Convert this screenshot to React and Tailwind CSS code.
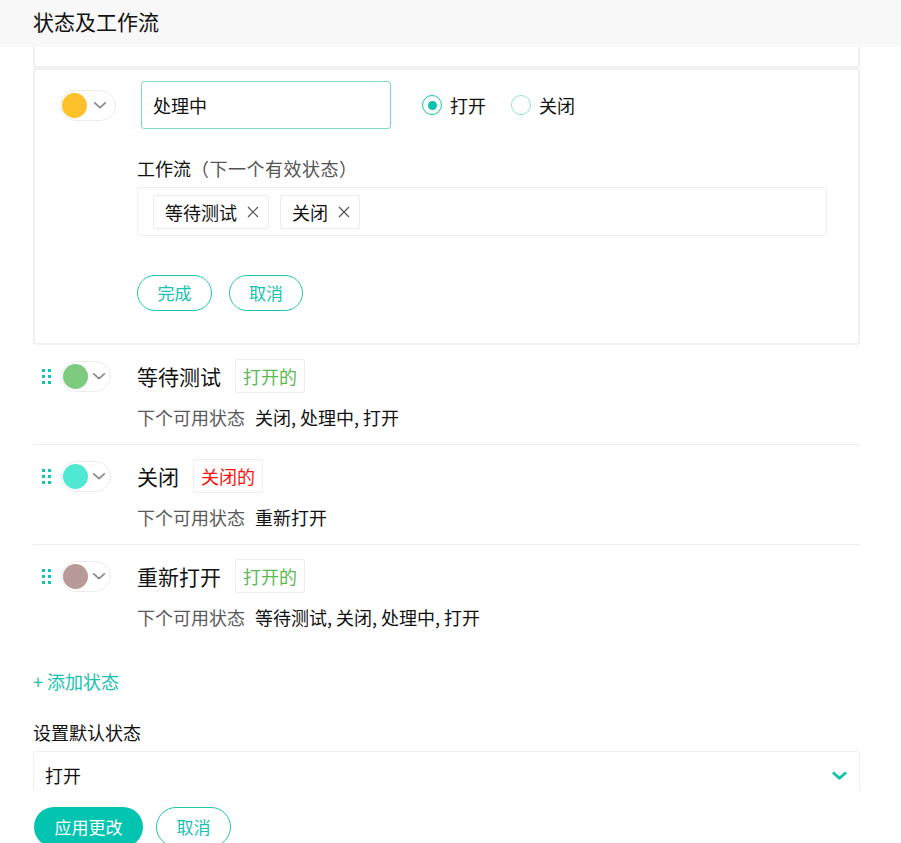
import React from "react";

const TEAL = "text-[#17c2ae]";

function Chevron({ className = "w-[14px] h-[14px] text-[#8a8a8a]", stroke = 1.5 }) {
  return (
    <svg viewBox="0 0 12 12" className={className} fill="none">
      <path d="M1.5 4.2 L6 8.2 L10.5 4.2" stroke="currentColor" strokeWidth={stroke} strokeLinecap="round" strokeLinejoin="round" />
    </svg>
  );
}

function ColorPill({ color, wide }) {
  return (
    <div
      className={`flex items-center h-[31px] ${wide ? "w-[56px]" : "w-[50px]"} rounded-full border border-[#ececec] bg-white pl-[1px]`}
    >
      <span className="w-[25px] h-[25px] rounded-full" style={{ background: color }} />
      <span className={`${wide ? "ml-[6px]" : "ml-[4px]"} flex items-center`}>
        <Chevron />
      </span>
    </div>
  );
}

function DragHandle() {
  return (
    <div className="grid grid-cols-2 gap-x-[3px] gap-y-[3px] w-[9px]">
      {[0, 1, 2, 3, 4, 5].map((i) => (
        <span key={i} className="w-[3px] h-[3px] bg-[#14c3b0]" />
      ))}
    </div>
  );
}

function Radio({ checked, label }) {
  return (
    <label className="flex items-center gap-[8px]">
      <span
        className={`w-[20px] h-[20px] rounded-full border flex items-center justify-center ${
          checked ? "border-[#17c2ae]" : "border-[#8fe2d8]"
        }`}
      >
        {checked && <span className="w-[9px] h-[9px] rounded-full bg-[#0ec2ad]" />}
      </span>
      <span className="text-[18px] leading-6">{label}</span>
    </label>
  );
}

function Tag({ text }) {
  return (
    <div className="flex items-center h-[34px] border border-[#ececec] rounded-[3px] pl-[11px] pr-[8px] gap-[9px]">
      <span className="text-[18px] leading-6">{text}</span>
      <svg viewBox="0 0 14 14" className="w-[14px] h-[14px] text-[#555]">
        <path d="M2 2 L12 12 M12 2 L2 12" stroke="currentColor" strokeWidth="1.2" />
      </svg>
    </div>
  );
}

function OutlineButton({ children, w }) {
  return (
    <button className={`h-[36px] ${w} rounded-full border border-[#1fc6b3] ${TEAL} text-[17px] leading-6 bg-white`}>
      {children}
    </button>
  );
}

const rows = [
  { name: "等待测试", color: "#7ccb7f", badge: "打开的", badgeColor: "text-[#5cba52]", next: "关闭, 处理中, 打开", divider: true },
  { name: "关闭", color: "#4fe8d2", badge: "关闭的", badgeColor: "text-[#ff1010]", next: "重新打开", divider: true },
  { name: "重新打开", color: "#b89a98", badge: "打开的", badgeColor: "text-[#5cba52]", next: "等待测试, 关闭, 处理中, 打开", divider: false },
];

export default function App() {
  return (
    <div
      className="h-[843px] w-full flex flex-col overflow-hidden bg-white text-[#111]"
      style={{ fontFamily: '"Noto Sans CJK SC", "Noto Sans", sans-serif' }}
    >
      {/* Header */}
      <div className="h-[47px] shrink-0 bg-[#f8f8f8] px-[33px] pt-[7px]">
        <h1 className="text-[21px] leading-[28px] font-normal">状态及工作流</h1>
      </div>

      {/* Body */}
      <div className="flex-1 overflow-hidden pl-[33px]">
        <div className="w-[827px]">
          {/* previous card tail */}
          <div className="h-[21px] border-2 border-t-0 border-[#f0f0f0] rounded-b-[3px]" />

          {/* Edit card */}
          <div className="border-2 border-[#f0f0f0] rounded-[3px] pt-[11px] pb-[32px] pl-[25px]">
            <div className="flex items-center h-[48px]">
              <ColorPill color="#fcc12b" wide />
              <div className="ml-[25px] w-[250px] h-[48px] border border-[#7fd8cc] rounded-[3px] flex items-center px-[11px]">
                <span className="text-[18px] leading-6">处理中</span>
              </div>
              <div className="ml-[31px] flex items-center gap-[25px]">
                <Radio checked label="打开" />
                <Radio label="关闭" />
              </div>
            </div>

            <div className="ml-[77px]">
              <p className="mt-[27px] text-[18px] leading-6">
                工作流<span className="text-[#555] tracking-[0.5px]">（下一个有效状态）</span>
              </p>
              <div className="mt-[7px] w-[690px] h-[49px] border border-[#eeeeee] rounded-[3px] flex items-center pl-[15px] gap-[11px]">
                <Tag text="等待测试" />
                <Tag text="关闭" />
              </div>
              <div className="mt-[39px] flex gap-[17px]">
                <OutlineButton w="w-[75px]">完成</OutlineButton>
                <OutlineButton w="w-[74px]">取消</OutlineButton>
              </div>
            </div>
          </div>

          {/* Status rows */}
          {rows.map((r) => (
            <div
              key={r.name}
              className={`pt-[14px] pb-[15px] ${r.divider ? "border-b border-[#eeeeee]" : ""}`}
            >
              <div className="flex items-center h-[34px]">
                <div className="w-[28px] pl-[9px] pt-[1px]">
                  <DragHandle />
                </div>
                <ColorPill color={r.color} />
                <span className="ml-[26px] text-[21px] leading-7">{r.name}</span>
                <span
                  className={`ml-[14px] h-[34px] px-[7px] border border-[#eeeeee] rounded-[3px] flex items-center text-[18px] ${r.badgeColor}`}
                >
                  {r.badge}
                </span>
              </div>
              <p className="mt-[12px] ml-[104px] text-[18px] leading-6">
                <span className="text-[#5a5a5a]">下个可用状态</span>
                <span className="ml-[10px]">{r.next}</span>
              </p>
            </div>
          ))}

          <p className={`mt-[25px] text-[18px] leading-6 ${TEAL}`}>+ 添加状态</p>

          <p className="mt-[27px] text-[18px] leading-6">设置默认状态</p>
          <div className="mt-[7px] h-[48px] border border-[#eeeeee] rounded-[3px] flex items-center justify-between pl-[11px] pr-[12px]">
            <span className="text-[18px] leading-6">打开</span>
            <Chevron className="w-[15px] h-[15px] text-[#12c2ad]" stroke={2.4} />
          </div>
        </div>
      </div>

      {/* Footer */}
      <div className="h-[53px] shrink-0 bg-white px-[34px] pt-[17px] flex gap-[13px] overflow-hidden">
        <button className="h-[40px] w-[109px] rounded-full bg-[#03c4b1] text-white text-[17px] leading-6">
          应用更改
        </button>
        <button className={`h-[40px] w-[75px] rounded-full border border-[#1fc6b3] ${TEAL} text-[17px] leading-6 bg-white`}>
          取消
        </button>
      </div>
    </div>
  );
}
